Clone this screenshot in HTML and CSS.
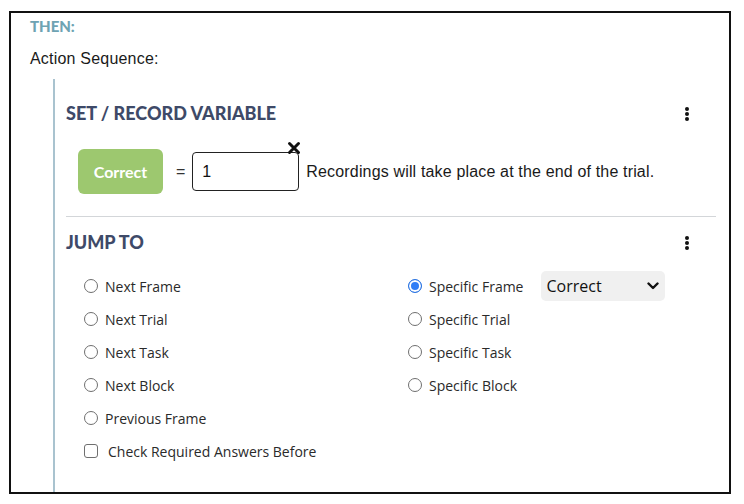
FILE: index.html
```html
<!DOCTYPE html>
<html>
<head>
<meta charset="utf-8">
<link rel="stylesheet" href="styles.css">
</head>
<body>
<div class="frame">
  <div class="then">THEN:</div>
  <div class="seq-label">Action Sequence:</div>
  <div class="seq">
    <section class="action">
      <div class="action-head">
        <h2 class="action-title">SET / RECORD VARIABLE</h2>
        <span class="kebab"><i></i><i></i><i></i></span>
      </div>
      <div class="setvar">
        <span class="var-chip">Correct</span>
        <span class="eq">=</span>
        <span class="value-box">
          <span class="value">1</span>
          <svg class="clear" width="14" height="14" viewBox="0 0 14 14"><path d="M2.5 2.5 L11.5 11.5 M11.5 2.5 L2.5 11.5" stroke="#111" stroke-width="3" stroke-linecap="round"/></svg>
        </span>
        <span class="note">Recordings will take place at the end of the trial.</span>
      </div>
    </section>
    <section class="action jump">
      <div class="action-head">
        <h2 class="action-title">JUMP TO</h2>
        <span class="kebab"><i></i><i></i><i></i></span>
      </div>
      <div class="options">
        <div class="col">
          <label class="opt"><span class="radio"></span>Next Frame</label>
          <label class="opt"><span class="radio"></span>Next Trial</label>
          <label class="opt"><span class="radio"></span>Next Task</label>
          <label class="opt"><span class="radio"></span>Next Block</label>
          <label class="opt"><span class="radio"></span>Previous Frame</label>
          <label class="opt check"><span class="box"></span>Check Required Answers Before</label>
        </div>
        <div class="col right">
          <div class="opt-row">
            <label class="opt"><span class="radio on"></span>Specific Frame</label>
            <div class="select"><span>Correct</span>
              <svg width="12" height="8" viewBox="0 0 12 8"><path d="M1.5 1.5 L6 6 L10.5 1.5" fill="none" stroke="#111" stroke-width="2.4" stroke-linecap="round" stroke-linejoin="round"/></svg>
            </div>
          </div>
          <label class="opt"><span class="radio"></span>Specific Trial</label>
          <label class="opt"><span class="radio"></span>Specific Task</label>
          <label class="opt"><span class="radio"></span>Specific Block</label>
        </div>
      </div>
    </section>
  </div>
</div>
</body>
</html>
```
FILE: styles.css
```css
* { box-sizing: border-box; }
html, body { margin: 0; padding: 0; background: #fff; }
body { font-family: "Liberation Sans", Arial, sans-serif; color: #111; }

.frame {
  margin: 11px 0 0 9px;
  width: 722px;
  height: 483px;
  border: 2px solid #111;
  padding: 3px 0 0 19px;
  overflow: hidden;
}

.then {
  font-family: Lato, sans-serif;
  font-weight: 900;
  font-size: 15px;
  line-height: 20px;
  color: #6ea3b3;
}

.seq-label {
  margin-top: 13px;
  font-size: 16px;
  line-height: 20px;
  color: #1a1a1a;
  letter-spacing: 0.2px;
}

.seq {
  margin: 10px 0 0 23px;
  border-left: 2px solid #a9c3cf;
  padding: 22px 13px 0 11px;
  height: 420px;
}

.action-head {
  display: flex;
  justify-content: space-between;
  align-items: flex-start;
  padding-right: 27px;
}

.action-title {
  margin: 0;
  font-family: Lato, sans-serif;
  font-weight: 900;
  font-size: 18px;
  line-height: 24px;
  color: #3e4a68;
}

.kebab {
  display: flex;
  flex-direction: column;
  gap: 1px;
  margin-top: 6px;
}
.kebab i {
  display: block;
  width: 4px;
  height: 4px;
  background: #111;
  border-radius: 50%;
}

.setvar {
  display: flex;
  align-items: center;
  padding: 24px 0 22px 12px;
  border-bottom: 1px solid #d3d6d9;
}

.var-chip {
  width: 85px;
  height: 45px;
  border-radius: 6px;
  background: #9dc86f;
  color: #fff;
  font-family: Lato, sans-serif;
  font-weight: 700;
  font-size: 16px;
  display: flex;
  align-items: center;
  justify-content: center;
}

.eq {
  margin: 0 7px 0 13px;
  font-size: 16px;
  color: #333;
}

.value-box {
  position: relative;
  width: 107px;
  height: 39px;
  border: 1px solid #222;
  border-radius: 4px;
  display: flex;
  align-items: center;
  padding-left: 9px;
  font-size: 16px;
}
.clear {
  position: absolute;
  top: -12px;
  right: -3px;
}

.note {
  margin-left: 7px;
  font-size: 16px;
  color: #1a1a1a;
  letter-spacing: 0.16px;
}

.jump { padding-top: 13px; }

.options {
  display: grid;
  grid-template-columns: 324px 1fr;
  padding: 22px 0 0 18px;
  font-family: "Open Sans", sans-serif;
  font-size: 14px;
  color: #2a2a2a;
}

.col {
  display: flex;
  flex-direction: column;
  gap: 13px;
}

.opt {
  display: flex;
  align-items: center;
  height: 20px;
  white-space: nowrap;
}

.opt-row {
  display: flex;
  align-items: center;
  gap: 18px;
  height: 20px;
}

.radio {
  width: 14px;
  height: 14px;
  border: 1px solid #6f6f6f;
  border-radius: 50%;
  margin-right: 7px;
  flex: none;
}
.radio.on {
  border: 1px solid #2b74e0;
  background: #2f7df6;
  box-shadow: inset 0 0 0 2px #fff;
}

.box {
  width: 14px;
  height: 14px;
  border: 1px solid #6f6f6f;
  border-radius: 3px;
  margin-right: 10px;
  flex: none;
}

.select {
  width: 124px;
  height: 30px;
  background: #f0f0f0;
  border-radius: 5px;
  display: flex;
  align-items: center;
  justify-content: space-between;
  padding: 0 6px 0 5px;
  font-size: 16px;
  color: #111;
}
```
